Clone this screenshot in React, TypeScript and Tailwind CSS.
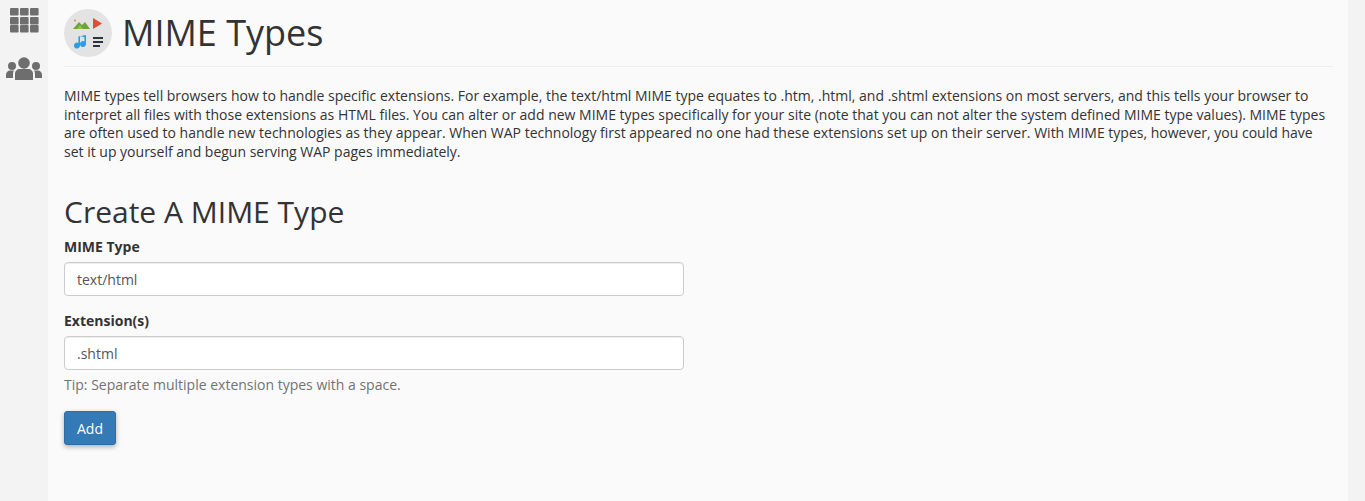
import React from "react";

const Field: React.FC<{ label: string; value: string }> = ({ label, value }) => (
    <div className="flex flex-col">
        <label className="mb-[5px] text-[14px] font-bold leading-[20px] text-[#333]">{label}</label>
        <input
            readOnly
            value={value}
            className="h-[34px] w-[620px] rounded-[4px] border border-[#ccc] bg-white px-3 text-[14px] text-[#555] shadow-[inset_0_1px_1px_rgba(0,0,0,0.075)] outline-none"
        />
    </div>
);

const PageIcon = () => (
    <svg viewBox="0 0 48 48" className="h-12 w-12 shrink-0">
        <circle cx="24" cy="24" r="24" fill="#e3e3e3" />
        <circle cx="11" cy="11.5" r="1" fill="#e8833a" />
        <path d="M9 20l6-7 3 3 3-3 5 7z" fill="#6fa43a" />
        <path d="M13 20l3-4 3 4z" fill="#8fbf5a" />
        <path d="M29 9l9 5.5-9 5.5z" fill="#e04b3a" />
        <path d="M16 27v9.5a3 3 0 1 1-1.6-2.6V27.5l7.6-1.5v9a3 3 0 1 1-1.6-2.6V28.2z" fill="#2a9fe0" />
        <path d="M29 28h10v2H29zM29 32h10v2H29zM29 36h7v2h-7z" fill="#2c3440" />
    </svg>
);

const Sidebar = () => (
    <div className="flex w-[48px] shrink-0 flex-col items-center bg-[#f3f3f3] pt-[8px] shadow-[2px_0_4px_rgba(0,0,0,0.2)]">
        <svg viewBox="0 0 29 25" className="h-[25px] w-[29px] fill-[#6e6e6e]">
            {[0, 10, 20].map((x) =>
                [0, 9, 17].map((y) => <rect key={`${x}-${y}`} x={x} y={y} width="8.6" height="7.6" rx="1" />)
            )}
        </svg>
        <svg viewBox="0 0 36 23" className="mt-[24px] h-[23px] w-[36px] fill-[#6e6e6e]">
            <circle cx="18" cy="6" r="5.8" />
            <circle cx="6" cy="9" r="4" />
            <circle cx="30" cy="9" r="4" />
            <path d="M9 23v-6c0-3 2-5 5-5h8c3 0 5 2 5 5v6z" />
            <path d="M0 21v-3c0-3 2-4.500 4-4.500h4c-.6 1-1 2-1 3.500v4z" />
            <path d="M36 21v-3c0-3-2-4.500-4-4.500h-4c.6 1 1 2 1 3.500v4z" />
        </svg>
    </div>
);

export default function App() {
    return (
        <div className="flex h-[501px] overflow-hidden bg-[#f3f3f3] font-['Open_Sans',sans-serif]">
            <Sidebar />
            <div className="w-[1300px] bg-[#fafafa] pl-4 pr-[15px] pt-[9px]">
                <div className="flex items-center gap-[10px] border-b border-[#eee] pb-[9px]">
                    <PageIcon />
                    <h1 className="text-[36px] font-normal leading-[48px] text-[#333]">MIME Types</h1>
                </div>
                <p className="mt-[20px] text-[14px] leading-[18.5px] text-[#333]">
                    MIME types tell browsers how to handle specific extensions. For example, the text/html MIME type
                    equates to .htm, .html, and .shtml extensions on most servers, and this tells your browser to
                    interpret all files with those extensions as HTML files. You can alter or add new MIME types
                    specifically for your site (note that you can not alter the system defined MIME type values). MIME
                    types are often used to handle new technologies as they appear. When WAP technology first appeared
                    no one had these extensions set up on their server. With MIME types, however, you could have set it
                    up yourself and begun serving WAP pages immediately.
                </p>
                <h2 className="mt-[31px] text-[30px] font-normal leading-[40px] text-[#333]">Create A MIME Type</h2>
                <div className="mt-[5px] flex flex-col gap-[15px]">
                    <Field label="MIME Type" value="text/html" />
                    <div className="flex flex-col">
                        <Field label="Extension(s)" value=".shtml" />
                        <span className="mt-[5px] text-[14px] leading-[20px] text-[#737373]">
                            Tip: Separate multiple extension types with a space.
                        </span>
                    </div>
                </div>
                <button className="mt-[16px] h-[34px] w-[52px] rounded-[3px] border border-[#2e6da4] bg-[#337ab7] text-[14px] text-white shadow-[0_2px_5px_rgba(0,0,0,0.3)]">
                    Add
                </button>
            </div>
        </div>
    );
}
